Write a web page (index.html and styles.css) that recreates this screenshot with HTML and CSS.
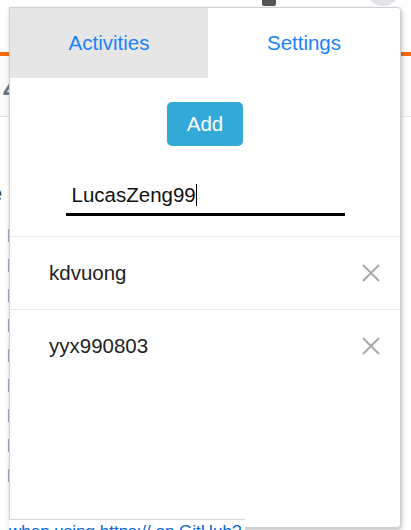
FILE: index.html
```html
<!DOCTYPE html>
<html>
<head>
<meta charset="utf-8">
<link rel="stylesheet" href="styles.css">
</head>
<body>
<div class="page">
  <div class="topbar">
    <span class="topbar-text">Pull requests Issues Marketplace Explore the h</span>
    <span class="topbar-badge"></span>
    <span class="topbar-avatar"></span>
  </div>
  <div class="repo-head">
    <span class="big-num">4</span>
  </div>
  <div class="repo-body">
    <p class="link-line">re</p>
    <p class="dark-line">e</p>
    <ul class="link-list">
      <li>l</li><li>l</li><li>l</li><li>l</li><li>l</li><li>l</li><li>l</li><li>l</li><li>l</li>
    </ul>
  </div>
</div>

<div class="popup">
  <div class="tabs">
    <div class="tab tab-inactive">Activities</div>
    <div class="tab tab-active">Settings</div>
  </div>
  <div class="settings">
    <button class="add-btn">Add</button>
    <div class="input-wrap">
      <div class="name-input">LucasZeng99<span class="caret"></span></div>
    </div>
    <ul class="users">
      <li class="user-row">
        <span class="user-name">kdvuong</span>
        <svg class="remove" width="20" height="20" viewBox="0 0 20 20"><path d="M2 2 L18 18 M18 2 L2 18" stroke="#a9a9a9" stroke-width="2" fill="none"/></svg>
      </li>
      <li class="user-row">
        <span class="user-name">yyx990803</span>
        <svg class="remove" width="20" height="20" viewBox="0 0 20 20"><path d="M2 2 L18 18 M18 2 L2 18" stroke="#a9a9a9" stroke-width="2" fill="none"/></svg>
      </li>
    </ul>
  </div>
</div>
<p class="bottom-link">when using https:// on GitHub?</p>
</body>
</html>
```

FILE: styles.css
```css
html, body {
  margin: 0;
  padding: 0;
}
body {
  width: 411px;
  height: 530px;
  overflow: hidden;
  position: relative;
  background: #fff;
  font-family: "Liberation Sans", Arial, sans-serif;
}

/* background page */
.page {
  width: 411px;
  height: 530px;
  background: #fafbfc;
}
.topbar {
  height: 52px;
  background: #fff;
  border-bottom: 4px solid #f66a0a;
  display: flex;
  align-items: flex-start;
  position: relative;
}
.topbar-text {
  margin: 20px 0 0 -330px;
  font-size: 14px;
  color: #444;
  white-space: nowrap;
}
.topbar-badge {
  width: 14px;
  height: 6px;
  background: #555;
  border-radius: 0 0 2px 2px;
  position: absolute;
  left: 262px;
  top: 0;
}
.topbar-avatar {
  position: absolute;
  left: 366px;
  top: -28px;
  width: 34px;
  height: 34px;
  border-radius: 50%;
  background: #e1e4e8;
}
.repo-head {
  height: 60px;
  border-bottom: 1px solid #e1e4e8;
  padding-left: 3px;
}
.big-num {
  font-size: 28px;
  font-weight: bold;
  color: #6a737d;
  line-height: 44px;
  display: inline-block;
  margin-top: 12px;
}
.repo-body {
  background: #fff;
  height: 420px;
}
.link-line {
  margin: 0;
  padding-top: 16px;
  margin-left: -14px;
  color: #0366d6;
  font-size: 16px;
  white-space: nowrap;
}
.dark-line {
  margin: 30px 0 0 -10px;
  font-size: 22px;
  color: #333;
}
.link-list {
  list-style: none;
  margin: 14px 0 0 7px;
  padding: 0;
}
.link-list li {
  color: #4a90c8;
  font-size: 18px;
  line-height: 30px;
}
.bottom-link {
  position: absolute;
  left: 9px;
  top: 519px;
  margin: 0;
  padding: 5px 4px 0 0;
  height: 6px;
  overflow: hidden;
  background: #fff;
  border-top: 1px solid #d8d8d8;
  color: #0366d6;
  font-size: 17px;
  line-height: 14px;
  white-space: nowrap;
  z-index: 2;
}

/* popup */
.popup {
  position: absolute;
  left: 9px;
  top: 7px;
  width: 390px;
  height: 519px;
  background: #fff;
  border: 1px solid #cfcfcf;
  border-radius: 0 4px 4px 0;
  box-shadow: 1px 2px 4px rgba(0, 0, 0, 0.25);
  overflow: hidden;
  z-index: 1;
}
.tabs {
  display: flex;
  height: 70px;
}
.tab {
  display: flex;
  align-items: center;
  justify-content: center;
  font-size: 20.5px;
  color: #1a82fb;
  padding-bottom: 1px;
}
.tab-inactive {
  width: 198px;
  background: #e6e6e6;
}
.tab-active {
  flex: 1;
  background: #fff;
}
.settings {
  display: flex;
  flex-direction: column;
  align-items: center;
}
.add-btn {
  margin-top: 24px;
  width: 76px;
  height: 44px;
  border: none;
  border-radius: 5px;
  background: #33a9d8;
  color: #fff;
  font-family: "Liberation Sans", Arial, sans-serif;
  font-size: 20.5px;
  padding: 0;
}
.input-wrap {
  margin-top: 31px;
  width: 279px;
}
.name-input {
  border-bottom: 3px solid #000;
  padding: 6px;
  font-size: 20.5px;
  line-height: 24px;
  color: #111;
  display: flex;
  align-items: center;
}
.caret {
  display: inline-block;
  width: 1px;
  height: 22px;
  background: #000;
}
.users {
  list-style: none;
  margin: 20px 0 0 0;
  padding: 0;
  width: 100%;
}
.user-row {
  height: 72px;
  border-top: 1px solid #e8e8e8;
  display: flex;
  align-items: center;
  justify-content: space-between;
  padding: 0 19px 0 39px;
}
.user-name {
  font-size: 20.5px;
  color: #222;
}
.remove {
  display: block;
}
```
